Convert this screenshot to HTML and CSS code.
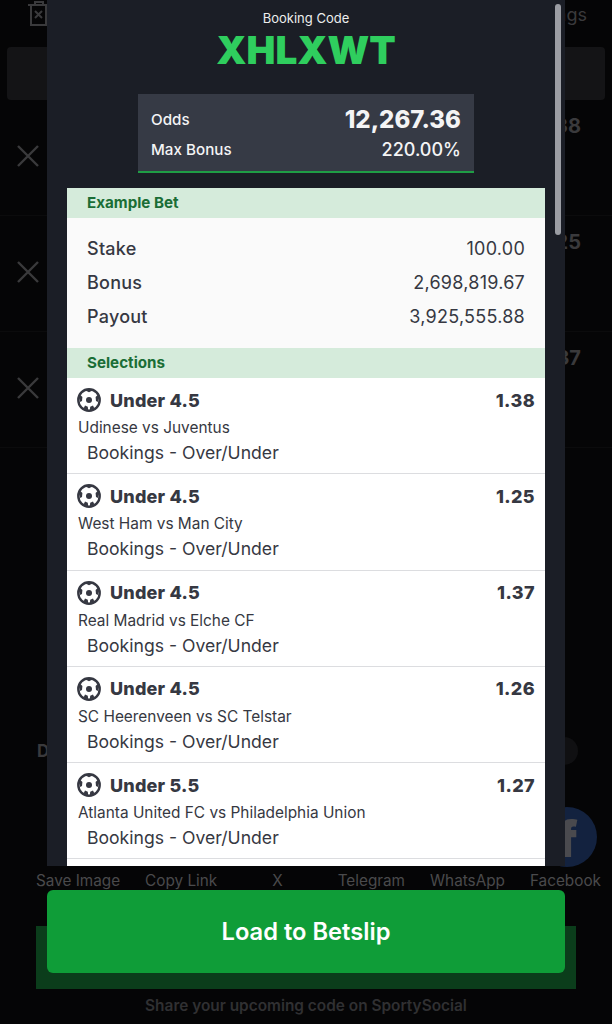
FILE: index.html
```html
<!DOCTYPE html>
<html lang="en">
<head>
    <meta charset="UTF-8">
    <meta name="viewport" content="width=device-width, initial-scale=1.0">
    <title>Booking Code</title>
    <link rel="stylesheet" href="styles.css">
</head>
<body>
    <div class="page">
        <div class="top-bar">
            <svg class="trash" width="24" height="26" viewBox="0 0 24 26" fill="none" stroke="#3a3a3c" stroke-width="2">
                <path d="M1 4h22M8 4V1h8v3M4 4v20h15V4M8 10l7 7M15 10l-7 7"/>
            </svg>
            <span class="top-link">Bookings</span>
        </div>
        <div class="tabs-band"></div>

        <div class="bg-row"><svg class="bg-x" viewBox="0 0 22 22"><use href="#cross"/></svg><span class="bg-odds">1.38</span></div>
        <div class="bg-row"><svg class="bg-x" viewBox="0 0 22 22"><use href="#cross"/></svg><span class="bg-odds">1.25</span></div>
        <div class="bg-row"><svg class="bg-x" viewBox="0 0 22 22"><use href="#cross"/></svg><span class="bg-odds">1.37</span></div>

        <div class="share-head">
            <span class="share-title">D</span>
            <span class="share-dot"></span>
        </div>
        <div class="share-icons">
            <span class="fb-circle">f</span>
        </div>
        <div class="share-labels">
            <span>Save Image</span>
            <span>Copy Link</span>
            <span class="label-x">X</span>
            <span>Telegram</span>
            <span>WhatsApp</span>
            <span>Facebook</span>
        </div>
        <div class="share-band"></div>
        <p class="share-note">Share your upcoming code on SportySocial</p>
    </div>

    <div class="modal">
        <div class="panel">
            <div class="scroll-thumb"></div>
            <p class="code-label">Booking Code</p>
            <h1 class="code">XHLXWT</h1>

            <div class="odds-box">
                <div class="odds-line">
                    <span>Odds</span>
                    <strong class="odds-total">12,267.36</strong>
                </div>
                <div class="odds-line">
                    <span>Max Bonus</span>
                    <span class="bonus-val">220.00%</span>
                </div>
            </div>

            <div class="card">
                <h2 class="card-head">Example Bet</h2>
                <div class="example">
                    <div class="example-line"><span class="example-name">Stake</span><span>100.00</span></div>
                    <div class="example-line"><span class="example-name">Bonus</span><span>2,698,819.67</span></div>
                    <div class="example-line"><span class="example-name">Payout</span><span>3,925,555.88</span></div>
                </div>
                <h2 class="card-head">Selections</h2>

                <div class="selection">
                    <div class="sel-top">
                        <svg class="ball" viewBox="0 0 24 24"><use href="#ball"/></svg>
                        <span class="sel-name">Under 4.5</span>
                        <span class="sel-odds">1.38</span>
                    </div>
                    <p class="sel-match">Udinese vs Juventus</p>
                    <p class="sel-market">Bookings - Over/Under</p>
                </div>
                <div class="selection">
                    <div class="sel-top">
                        <svg class="ball" viewBox="0 0 24 24"><use href="#ball"/></svg>
                        <span class="sel-name">Under 4.5</span>
                        <span class="sel-odds">1.25</span>
                    </div>
                    <p class="sel-match">West Ham vs Man City</p>
                    <p class="sel-market">Bookings - Over/Under</p>
                </div>
                <div class="selection">
                    <div class="sel-top">
                        <svg class="ball" viewBox="0 0 24 24"><use href="#ball"/></svg>
                        <span class="sel-name">Under 4.5</span>
                        <span class="sel-odds">1.37</span>
                    </div>
                    <p class="sel-match">Real Madrid vs Elche CF</p>
                    <p class="sel-market">Bookings - Over/Under</p>
                </div>
                <div class="selection">
                    <div class="sel-top">
                        <svg class="ball" viewBox="0 0 24 24"><use href="#ball"/></svg>
                        <span class="sel-name">Under 4.5</span>
                        <span class="sel-odds">1.26</span>
                    </div>
                    <p class="sel-match">SC Heerenveen vs SC Telstar</p>
                    <p class="sel-market">Bookings - Over/Under</p>
                </div>
                <div class="selection">
                    <div class="sel-top">
                        <svg class="ball" viewBox="0 0 24 24"><use href="#ball"/></svg>
                        <span class="sel-name">Under 5.5</span>
                        <span class="sel-odds">1.27</span>
                    </div>
                    <p class="sel-match">Atlanta United FC vs Philadelphia Union</p>
                    <p class="sel-market">Bookings - Over/Under</p>
                </div>
            </div>
        </div>
        <button class="load-btn" type="button">Load to Betslip</button>
    </div>

    <svg width="0" height="0" class="defs">
        <symbol id="ball" viewBox="0 0 24 24">
            <circle cx="12" cy="12" r="10.7" fill="#fff" stroke="#363842" stroke-width="2.4"/>
            <circle cx="12" cy="12" r="3" fill="#363842"/>
            <path d="M8 2.2L12 4.2l4-2L12 1.2zM2 9.5l1 4.4 2-1 .4-4-2-1.8zM22 9.5l-1 4.4-2-1-.4-4 2-1.8zM6.6 20.6l1.4-3 2.8 1.2.4 3.6zM17.4 20.6l-1.4-3-2.8 1.2-.4 3.6z" fill="#363842"/>
        </symbol>
        <symbol id="cross" viewBox="0 0 22 22">
            <path d="M1 1l20 20M21 1L1 21" fill="none" stroke="#3a3a3c" stroke-width="2.4"/>
        </symbol>
    </svg>
</body>
</html>
```

FILE: styles.css
```css
* {
    box-sizing: border-box;
}

html, body {
    margin: 0;
    padding: 0;
}

body {
    width: 612px;
    height: 1024px;
    overflow: hidden;
    position: relative;
    background: #050506;
    font-family: Inter, sans-serif;
}

h1, h2, p {
    margin: 0;
}

.defs {
    position: absolute;
}

/* dimmed page behind the modal */
.page {
    height: 1024px;
    display: flex;
    flex-direction: column;
}

.top-bar {
    height: 47px;
    padding: 1px 25px 0 27px;
    display: flex;
    justify-content: space-between;
    align-items: flex-start;
}

.top-link {
    font-size: 18px;
    line-height: 28px;
    color: #3a3a3c;
}

.tabs-band {
    height: 53px;
    margin: 0 7px;
    background: #141416;
    border-radius: 4px;
}

.bg-row {
    height: 116px;
    padding: 0 31px 0 17px;
    display: flex;
    justify-content: space-between;
    border-bottom: 1px solid #0b0b0c;
}

.bg-x {
    width: 22px;
    height: 22px;
    margin-top: 45px;
}

.bg-odds {
    font-size: 20px;
    font-weight: 700;
    line-height: 52px;
    color: #3a3a3c;
}

.share-head {
    margin-top: 274px;
    height: 57px;
    padding: 0 37px;
    display: flex;
    justify-content: space-between;
    align-items: center;
    color: #3a3a3c;
    font-weight: 700;
    font-size: 17px;
}

.share-dot {
    width: 28px;
    height: 28px;
    margin-right: -3px;
    border-radius: 50%;
    background: #101012;
}

.share-icons {
    height: 60px;
    margin-top: 28px;
    padding-right: 15px;
    display: flex;
    justify-content: flex-end;
}

.fb-circle {
    width: 60px;
    height: 60px;
    border-radius: 50%;
    background: #13223f;
    color: #4a4a4e;
    font-size: 50px;
    font-weight: 900;
    line-height: 64px;
    text-align: center;
}

.share-labels {
    height: 55px;
    margin-top: 4px;
    padding-left: 36px;
    display: flex;
    gap: 25px;
    font-size: 15.3px;
    line-height: 20px;
    white-space: nowrap;
    color: #4a4a4c;
}

.label-x {
    margin: 0 30px;
}

.share-band {
    height: 63px;
    margin: 0 36px;
    background: #0b3d1b;
}

.share-note {
    margin-top: 7px;
    text-align: center;
    font-size: 15.4px;
    font-weight: 600;
    color: #303032;
}

/* modal */
.modal {
    position: absolute;
    top: 0;
    left: 47px;
    width: 518px;
    display: flex;
    flex-direction: column;
    gap: 24px;
}

.panel {
    position: relative;
    height: 866px;
    padding: 11px 20px 0;
    overflow: hidden;
    background: #1b1e26;
}

.scroll-thumb {
    position: absolute;
    top: 4px;
    left: 508px;
    width: 6px;
    height: 231px;
    border-radius: 3px;
    background: #9b9da3;
}

.code-label {
    text-align: center;
    font-size: 13px;
    line-height: 14px;
    color: #eceded;
}

.code {
    margin-top: 6px;
    text-align: center;
    font-size: 38.6px;
    font-weight: 900;
    line-height: 38px;
    color: #2fce5e;
}

.odds-box {
    width: 336px;
    height: 79px;
    margin: 25px auto 15px;
    padding: 10px 13px 0;
    background: #363a45;
    border-bottom: 2px solid #1f9c45;
    color: #f4f4f5;
}

.odds-line {
    display: flex;
    justify-content: space-between;
    align-items: center;
    height: 30px;
    font-size: 15.2px;
    font-weight: 500;
}

.odds-total {
    font-size: 24px;
    font-weight: 800;
}

.bonus-val {
    font-size: 18px;
}

.card {
    height: 678px;
    overflow: hidden;
    background: #fff;
    color: #363842;
}

.card-head {
    height: 30px;
    padding-left: 20px;
    background: #d5ebdb;
    color: #1a6e36;
    font-size: 15.2px;
    font-weight: 700;
    line-height: 30px;
}

.example {
    height: 130px;
    padding: 14px 20px 0;
    background: #fafafa;
}

.example-line {
    display: flex;
    justify-content: space-between;
    height: 34px;
    font-size: 18px;
    line-height: 34px;
    letter-spacing: 0.25px;
}

.example-name {
    font-weight: 500;
}

.selection {
    height: 96.3px;
    padding: 9px 10px 0;
    border-bottom: 1px solid #dcdde0;
}

.sel-top {
    display: flex;
    align-items: center;
    height: 26px;
}

.ball {
    width: 24px;
    height: 24px;
    margin-right: 9px;
}

.sel-name {
    flex: 1;
    font-size: 18px;
    font-weight: 800;
    letter-spacing: 0.2px;
}

.sel-odds {
    font-size: 18px;
    font-weight: 800;
    letter-spacing: 0.4px;
}

.sel-match {
    margin-top: 6px;
    margin-left: 1px;
    font-size: 15.4px;
    line-height: 18px;
}

.sel-market {
    margin-top: 4px;
    padding-left: 10px;
    font-size: 17.6px;
    line-height: 24px;
}

.load-btn {
    height: 83px;
    border: none;
    border-radius: 6px;
    background: #0f9d38;
    color: #fff;
    font-family: Inter, sans-serif;
    font-size: 23.7px;
    font-weight: 600;
}
```
